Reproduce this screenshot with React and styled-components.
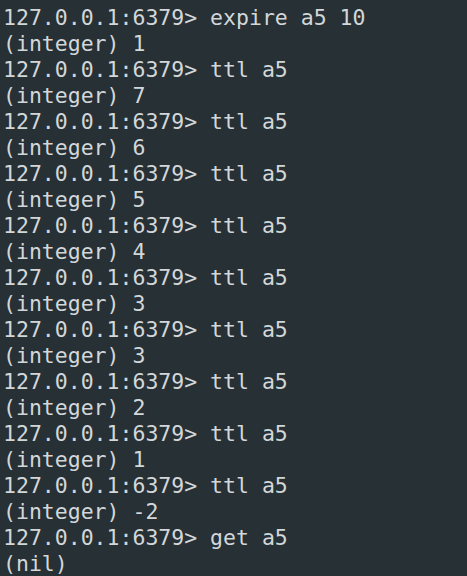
import React from "react";
import styled, { createGlobalStyle } from "styled-components";

const lines = [
  "127.0.0.1:6379> expire a5 10",
  "(integer) 1",
  "127.0.0.1:6379> ttl a5",
  "(integer) 7",
  "127.0.0.1:6379> ttl a5",
  "(integer) 6",
  "127.0.0.1:6379> ttl a5",
  "(integer) 5",
  "127.0.0.1:6379> ttl a5",
  "(integer) 4",
  "127.0.0.1:6379> ttl a5",
  "(integer) 3",
  "127.0.0.1:6379> ttl a5",
  "(integer) 3",
  "127.0.0.1:6379> ttl a5",
  "(integer) 2",
  "127.0.0.1:6379> ttl a5",
  "(integer) 1",
  "127.0.0.1:6379> ttl a5",
  "(integer) -2",
  "127.0.0.1:6379> get a5",
  "(nil)",
];

const GlobalStyle = createGlobalStyle`
  html, body {
    margin: 0;
    padding: 0;
    background: #263035;
  }
`;

const Terminal = styled.div`
  width: 467px;
  height: 576px;
  overflow: hidden;
  background: #263035;
  color: #d3d7d9;
  font-family: "DejaVu Sans Mono", monospace;
  font-size: 21.5px;
  line-height: 26px;
  padding: 5px 0 0 3px;
  box-sizing: border-box;
`;

const Line = styled.div`
  white-space: pre;
`;

const App = () => {
  return (
    <>
      <GlobalStyle />
      <Terminal>
        {lines.map((l, i) => (
          <Line key={i}>{l}</Line>
        ))}
      </Terminal>
    </>
  );
};

export default App;
